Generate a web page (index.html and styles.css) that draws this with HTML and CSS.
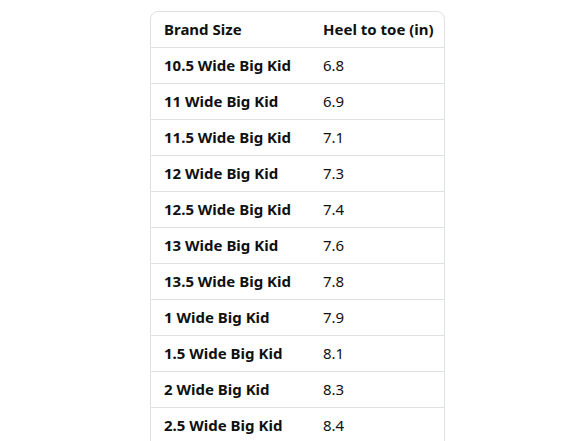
FILE: index.html
```html
<!DOCTYPE html>
<html>
<head>
<meta charset="utf-8">
<link rel="stylesheet" href="styles.css">
</head>
<body>
<div class="page">
  <div class="card">
    <table class="size-table">
      <colgroup><col class="col-size"><col class="col-len"></colgroup>
      <thead>
        <tr><th>Brand Size</th><th>Heel to toe (in)</th></tr>
      </thead>
      <tbody>
        <tr><th>10.5 Wide Big Kid</th><td>6.8</td></tr>
        <tr><th>11 Wide Big Kid</th><td>6.9</td></tr>
        <tr><th>11.5 Wide Big Kid</th><td>7.1</td></tr>
        <tr><th>12 Wide Big Kid</th><td>7.3</td></tr>
        <tr><th>12.5 Wide Big Kid</th><td>7.4</td></tr>
        <tr><th>13 Wide Big Kid</th><td>7.6</td></tr>
        <tr><th>13.5 Wide Big Kid</th><td>7.8</td></tr>
        <tr><th>1 Wide Big Kid</th><td>7.9</td></tr>
        <tr><th>1.5 Wide Big Kid</th><td>8.1</td></tr>
        <tr><th>2 Wide Big Kid</th><td>8.3</td></tr>
        <tr><th>2.5 Wide Big Kid</th><td>8.4</td></tr>
      </tbody>
    </table>
  </div>
</div>
</body>
</html>
```
FILE: styles.css
```css
html, body {
  margin: 0;
  padding: 0;
  background: #ffffff;
  overflow: hidden;
}
.page {
  padding: 11px 0 0 150px;
  height: 441px;
  box-sizing: border-box;
  font-family: "Noto Sans", "Liberation Sans", sans-serif;
  color: #0f1111;
}
.card {
  width: 295px;
  box-sizing: border-box;
  border: 1px solid #dfe2e2;
  border-radius: 8px 8px 0 0;
  overflow: hidden;
}
.size-table {
  width: 100%;
  border-collapse: collapse;
  table-layout: fixed;
  font-size: 15px;
}
.col-size {
  width: 159px;
}
.size-table th,
.size-table td {
  height: 33px;
  padding: 0 0 2px 13px;
  text-align: left;
  vertical-align: middle;
  line-height: 20px;
  white-space: nowrap;
}
.size-table th {
  font-weight: 700;
}
.size-table td {
  font-weight: 400;
}
.size-table tbody tr {
  border-top: 1px solid #dfe2e2;
}
```
